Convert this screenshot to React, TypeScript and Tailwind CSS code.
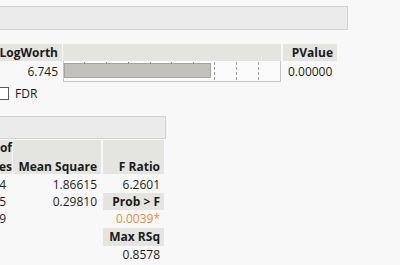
import React from 'react';

const ticks = [84, 106, 128, 150, 171, 193];
const dotted = [214, 236, 258];

const App = () => {
  const rows = [
    { ss: "4", ms: "1.86615", f: "6.2601", fHead: false, orange: false },
    { ss: "5", ms: "0.29810", f: "Prob > F", fHead: true, orange: false },
    { ss: "9", ms: "", f: "0.0039*", fHead: false, orange: true },
    { ss: "", ms: "", f: "Max RSq", fHead: true, orange: false },
    { ss: "", ms: "", f: "0.8578", fHead: false, orange: false },
  ];
  const heights = ["h-[17px]", "h-[17px]", "h-[18px]", "h-[18px]", "h-[18px]"];

  return (
    <div className="w-[400px] h-[265px] overflow-hidden bg-[#f8f8f8] text-[12px] text-[#1b1b1b] font-['Open_Sans',sans-serif] leading-none">
      {/* outline bar */}
      <div className="mt-[6px] -ml-[2px] w-[350px] h-[24px] border border-[#d2d2d2] bg-[#ebebeb]" />

      {/* LogWorth table */}
      <div className="mt-[14px] flex h-[17px] font-bold">
        <div className="w-[62px] bg-[#e5e5e0] flex items-center justify-end pr-[4px]">LogWorth</div>
        <div className="ml-px w-[218px] bg-[#e5e5e0]" />
        <div className="ml-[2px] w-[54px] bg-[#e5e5e0] flex items-center justify-end pr-[4px]">PValue</div>
      </div>
      <div className="flex h-[21px]">
        <div className="w-[62px] flex items-center justify-end pr-[4px]">6.745</div>
        <div className="ml-px w-[218px] relative border-l border-r border-b border-[#c4c4c4] bg-[#fbfbfb]">
          <div className="absolute left-0 top-[2px] w-[147px] h-[15px] bg-[#c2c2ba] border border-[#a6a6a0]" />
          {ticks.map((x) => (
            <div key={x} className="absolute top-[1px] w-px h-[2px] bg-[#8e8e8a]" style={{ left: x - 64 }} />
          ))}
          {dotted.map((x) => (
            <div key={x} className="absolute top-[1px] bottom-px border-l border-dashed border-[#a0a0a0]" style={{ left: x - 64 }} />
          ))}
        </div>
        <div className="ml-[7px] flex items-center">0.00000</div>
      </div>

      {/* FDR */}
      <div className="mt-[4px] flex items-center h-[15px]">
        <div className="-ml-[4px] w-[13px] h-[13px] border border-[#5a5a5a] bg-white" />
        <span className="ml-[6px]">FDR</span>
      </div>

      {/* second outline bar */}
      <div className="mt-[15px] -ml-[2px] w-[168px] h-[23px] border border-[#d2d2d2] bg-[#ebebeb]" />

      {/* table */}
      <div className="mt-[1px] flex h-[34px] font-bold">
        <div className="w-[12px] bg-[#e5e5e0] flex flex-col items-end justify-end pb-px gap-[7px]">
          <span>of</span>
          <span>es</span>
        </div>
        <div className="ml-[1px] w-[88px] bg-[#e5e5e0] flex items-end justify-end pr-[4px] pb-px">Mean Square</div>
        <div className="ml-[2px] w-[61px] bg-[#e5e5e0] flex items-end justify-end pr-[4px] pb-px">F Ratio</div>
      </div>
      <div className="mt-[2px]">
        {rows.map((r, i) => (
          <div key={i} className={`flex ${heights[i]}`}>
            <div className="w-[12px] flex items-center justify-end pr-[6px]">{r.ss}</div>
            <div className="ml-[1px] w-[88px] flex items-center justify-end pr-[4px]">{r.ms}</div>
            <div
              className={`ml-[2px] w-[61px] flex items-center justify-end pr-[4px] ${
                r.fHead ? "bg-[#e5e5e0] font-bold" : ""
              } ${r.orange ? "text-[#f28a30]" : ""}`}
            >
              {r.f}
            </div>
          </div>
        ))}
      </div>
    </div>
  );
};

export default App;
